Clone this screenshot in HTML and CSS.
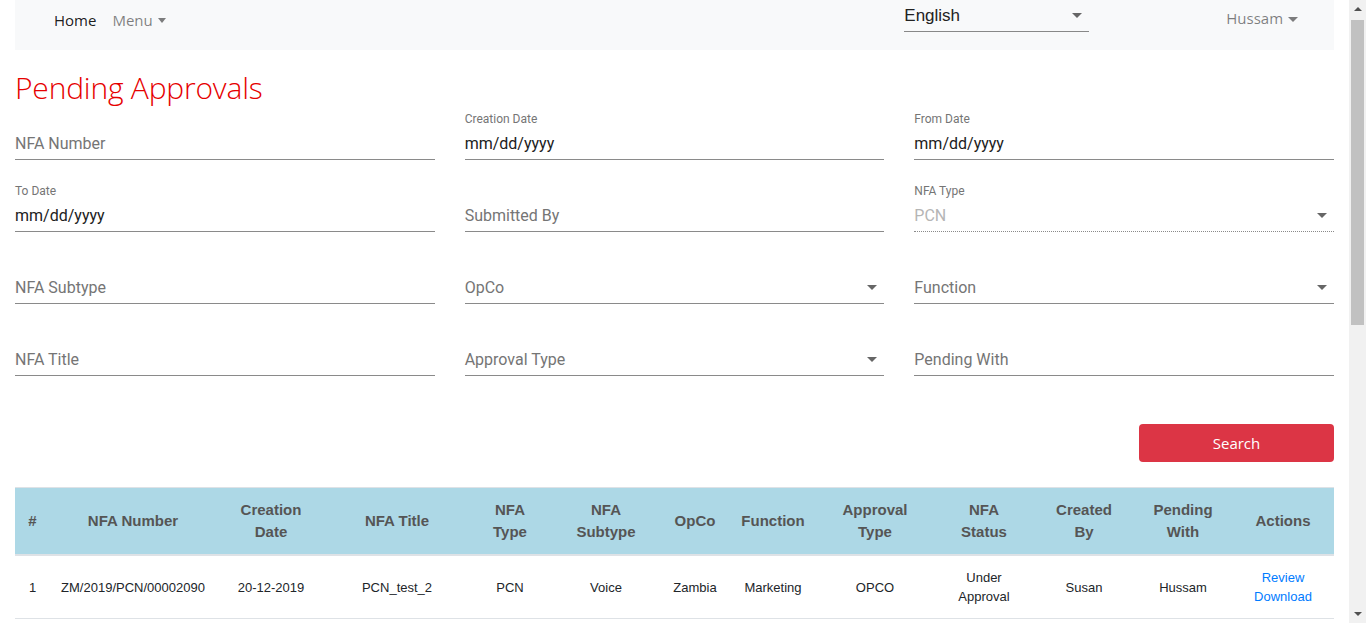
FILE: index.html
```html
<!DOCTYPE html>
<html lang="en">
<head>
<meta charset="utf-8">
<title>Pending Approvals</title>
<link rel="stylesheet" href="styles.css">
</head>
<body>
<div class="container">
  <nav class="navbar">
    <div class="nav-left">
      <a class="nav-link active" href="#">Home</a>
      <a class="nav-link dropdown" href="#">Menu <span class="caret"></span></a>
    </div>
    <div class="nav-right">
      <div class="lang-select">
        <span>English</span>
        <span class="caret dark"></span>
      </div>
      <a class="nav-link user" href="#">Hussam <span class="caret small"></span></a>
    </div>
  </nav>

  <h1 class="page-title">Pending Approvals</h1>

  <form class="filters">
    <div class="field"><label class="lbl"></label><div class="input placeholder">NFA Number</div></div>
    <div class="field"><label class="lbl">Creation Date</label><div class="input">mm/dd/yyyy</div></div>
    <div class="field"><label class="lbl">From Date</label><div class="input">mm/dd/yyyy</div></div>

    <div class="field"><label class="lbl">To Date</label><div class="input">mm/dd/yyyy</div></div>
    <div class="field"><label class="lbl"></label><div class="input placeholder">Submitted By</div></div>
    <div class="field"><label class="lbl">NFA Type</label><div class="input select disabled">PCN<span class="caret dark"></span></div></div>

    <div class="field"><label class="lbl"></label><div class="input placeholder">NFA Subtype</div></div>
    <div class="field"><label class="lbl"></label><div class="input select placeholder">OpCo<span class="caret dark"></span></div></div>
    <div class="field"><label class="lbl"></label><div class="input select placeholder">Function<span class="caret dark"></span></div></div>

    <div class="field"><label class="lbl"></label><div class="input placeholder">NFA Title</div></div>
    <div class="field"><label class="lbl"></label><div class="input select placeholder">Approval Type<span class="caret dark"></span></div></div>
    <div class="field"><label class="lbl"></label><div class="input placeholder">Pending With</div></div>
  </form>

  <div class="actions-row">
    <button class="btn-search" type="button">Search</button>
  </div>

  <table class="results">
    <colgroup>
      <col class="c-idx"><col class="c-num"><col class="c-date"><col class="c-title"><col class="c-type"><col class="c-sub"><col class="c-opco"><col class="c-func"><col class="c-appr"><col class="c-status"><col class="c-created"><col class="c-pending"><col class="c-actions">
    </colgroup>
    <thead>
      <tr>
        <th>#</th><th>NFA Number</th><th>Creation<br>Date</th><th>NFA Title</th><th>NFA<br>Type</th><th>NFA<br>Subtype</th><th>OpCo</th><th>Function</th><th>Approval<br>Type</th><th>NFA<br>Status</th><th>Created<br>By</th><th>Pending<br>With</th><th>Actions</th>
      </tr>
    </thead>
    <tbody>
      <tr>
        <td>1</td><td>ZM/2019/PCN/00002090</td><td>20-12-2019</td><td>PCN_test_2</td><td>PCN</td><td>Voice</td><td>Zambia</td><td>Marketing</td><td>OPCO</td><td>Under<br>Approval</td><td>Susan</td><td>Hussam</td><td><a href="#">Review</a><br><a href="#">Download</a></td>
      </tr>
    </tbody>
  </table>
</div>

<div class="scrollbar" aria-hidden="true">
  <span class="sb-arrow up"></span>
  <span class="sb-thumb"></span>
  <span class="sb-arrow down"></span>
</div>
</body>
</html>
```

FILE: styles.css
```css
html, body {
  margin: 0;
  padding: 0;
}
body {
  font-family: Roboto, "Liberation Sans", sans-serif;
  color: #212529;
  background: #fff;
}
.container {
  padding: 0 15px;
  margin-right: 17px;
}

/* fake browser scrollbar */
.scrollbar {
  position: fixed;
  top: 0;
  right: 0;
  width: 17px;
  height: 100vh;
  background: #f1f1f1;
  display: flex;
  flex-direction: column;
  align-items: center;
}
.sb-arrow {
  width: 0;
  height: 0;
  border-left: 4px solid transparent;
  border-right: 4px solid transparent;
}
.sb-arrow.up {
  border-bottom: 4px solid #505050;
  margin-top: 7px;
}
.sb-arrow.down {
  border-top: 4px solid #505050;
  margin-top: auto;
  margin-bottom: 7px;
}
.sb-thumb {
  width: 13px;
  height: 305px;
  background: #c1c1c1;
  margin-top: 9px;
}

/* navbar */
.navbar {
  height: 50px;
  background: #f8f9fa;
  display: flex;
  justify-content: space-between;
  align-items: flex-start;
}
.nav-left {
  display: flex;
  padding-left: 39px;
  padding-top: 10px;
  gap: 16px;
}
.nav-link {
  font-family: "Open Sans", sans-serif;
  font-size: 15px;
  line-height: 20px;
  text-decoration: none;
  color: rgba(0, 0, 0, 0.5);
}
.nav-link.active {
  color: rgba(0, 0, 0, 0.9);
}
.caret {
  display: inline-block;
  width: 0;
  height: 0;
  border-left: 4px solid transparent;
  border-right: 4px solid transparent;
  border-top: 5px solid rgba(0, 0, 0, 0.5);
  vertical-align: 3px;
  margin-left: 1px;
}
.caret.dark {
  border-left-width: 5px;
  border-right-width: 5px;
  border-top: 5px solid #666;
}
.caret.small {
  border-left-width: 5px;
  border-right-width: 5px;
  border-top-width: 5px;
  vertical-align: 2px;
}
.nav-right {
  display: flex;
  align-items: flex-start;
}
.lang-select {
  width: 185px;
  height: 31px;
  box-sizing: border-box;
  border-bottom: 1px solid #888;
  display: flex;
  justify-content: space-between;
  align-items: center;
  font-family: "Liberation Sans", Arial, sans-serif;
  font-size: 17px;
  color: #222;
  padding: 0 7px 1px 0;
  margin-top: 1px;
}
.lang-select .caret {
  vertical-align: middle;
}
.nav-right .user {
  margin-left: 137px;
  margin-right: 36px;
  padding-top: 8px;
}

/* title */
.page-title {
  font-family: "Open Sans", sans-serif;
  font-weight: 300;
  font-size: 30px;
  line-height: 38px;
  color: #e60000;
  margin: 19px 0 4px;
  letter-spacing: -0.2px;
}

/* filters */
.filters {
  display: grid;
  grid-template-columns: repeat(3, 1fr);
  column-gap: 30px;
  row-gap: 23px;
}
.field {
  display: flex;
  flex-direction: column;
}
.lbl {
  font-size: 12px;
  line-height: 14px;
  height: 14px;
  color: #757575;
  margin-top: 1px;
  margin-bottom: 4px;
}
.input {
  height: 30px;
  box-sizing: border-box;
  border-bottom: 1px solid #8a8a8a;
  font-size: 16px;
  line-height: 26px;
  color: #212121;
  display: flex;
  justify-content: space-between;
  align-items: center;
  padding: 0 7px 2px 0;
}
.input.placeholder {
  color: #757575;
}
.input.disabled {
  color: #b5b5b5;
  border-bottom: 1px dotted #8a8a8a;
}

/* search */
.actions-row {
  display: flex;
  justify-content: flex-end;
  margin-top: 48px;
}
.btn-search {
  width: 195px;
  height: 38px;
  border: none;
  border-radius: 4px;
  background: #dc3545;
  color: #fff;
  font-family: "Open Sans", sans-serif;
  font-size: 15px;
}

/* table */
.results {
  width: 100%;
  margin-top: 25px;
  border-collapse: collapse;
  table-layout: fixed;
  font-family: "Liberation Sans", Arial, sans-serif;
  text-align: center;
}
.c-idx { width: 35px; }
.c-num { width: 166px; }
.c-date { width: 110px; }
.c-title { width: 142px; }
.c-type { width: 84px; }
.c-sub { width: 108px; }
.c-opco { width: 70px; }
.c-func { width: 86px; }
.c-appr { width: 118px; }
.c-status { width: 100px; }
.c-created { width: 100px; }
.c-pending { width: 98px; }
.c-actions { width: 102px; }

.results thead th {
  background: #add8e6;
  color: #555;
  font-size: 15px;
  font-weight: bold;
  line-height: 22px;
  padding: 11px 0;
  border-top: 1px solid #dee2e6;
  border-bottom: 2px solid #dee2e6;
}
.results tbody td {
  font-size: 13px;
  line-height: 19px;
  color: #212529;
  padding: 12px 0;
  border-bottom: 1px solid #dee2e6;
}
.results a {
  color: #007bff;
  text-decoration: none;
}
```
